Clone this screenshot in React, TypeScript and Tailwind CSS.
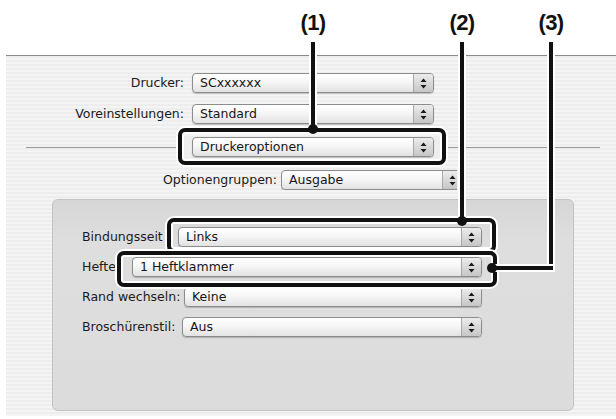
import clsx from 'clsx';

function Arrows() {
  return (
    <svg width="7" height="11" viewBox="0 0 7 11">
      <path d="M3.5 0.5 L6.5 4 L0.5 4 Z" fill="#1a1a1a" />
      <path d="M3.5 10.5 L6.5 7 L0.5 7 Z" fill="#1a1a1a" />
    </svg>
  );
}

function Popup({ value, className }: { value: string; className?: string }) {
  return (
    <div
      className={clsx(
        'flex h-[20px] items-stretch rounded-[4px] border border-[#8c8c8c] bg-[linear-gradient(#ffffff,#f6f6f6_45%,#e2e2e2)] shadow-[0_1px_1px_rgba(0,0,0,0.2)]',
        className,
      )}
    >
      <span className="flex-1 truncate pl-[7px] text-[12.5px] leading-[18px] text-[#151515]">{value}</span>
      <span className="flex w-[20px] shrink-0 items-center justify-center rounded-r-[3px] border-l border-[#a8a8a8] bg-[linear-gradient(#ececec,#c6c6c6)]">
        <Arrows />
      </span>
    </div>
  );
}

function Label({ text, className }: { text: string; className?: string }) {
  return <span className={clsx('shrink-0 text-[12.5px] leading-[20px] text-[#1a1a1a]', className)}>{text}</span>;
}

export default function App() {
  return (
    <div className="relative h-[419px] w-[616px] overflow-hidden bg-white font-['DejaVu_Sans','Liberation_Sans',sans-serif]">
      <div className="h-[55px]" />

      {/* dialog */}
      <div className="ml-[6px] flex h-[361px] flex-col border-t border-[#8a8a8a] bg-[repeating-linear-gradient(180deg,#ededed_0px,#ededed_2px,#f4f4f4_2px,#f4f4f4_4px)] pt-[17px]">
        <div className="flex items-center">
          <Label text="Drucker:" className="w-[178px] text-right" />
          <Popup value="SCxxxxxx" className="ml-[8px] w-[242px]" />
        </div>
        <div className="mt-[11px] flex items-center">
          <Label text="Voreinstellungen:" className="w-[178px] text-right" />
          <Popup value="Standard" className="ml-[8px] w-[242px]" />
        </div>
        <div className="relative mt-[13px] flex items-center">
          <div className="absolute left-[20px] right-[16px] top-[10px] h-px bg-[#9a9a9a]" />
          <div className="relative ml-[178px] bg-[#eeeeee] px-[8px]">
            <Popup value="Druckeroptionen" className="w-[242px]" />
          </div>
        </div>
        <div className="mt-[13px] flex items-center">
          <Label text="Optionengruppen:" className="w-[271px] text-right" />
          <div className="ml-[4px] w-[176px] overflow-hidden">
            <Popup value="Ausgabe" className="w-[182px]" />
          </div>
        </div>

        {/* group box */}
        <div className="ml-[46px] mt-[9px] flex h-[212px] w-[522px] flex-col gap-[10px] rounded-[6px] border border-[#c2c2c2] bg-[linear-gradient(#d6d6d6,#dedede_20%,#dcdcdc)] pl-[29px] pr-[91px] pt-[27px]">
          <div className="flex items-center">
            <Label text="Bindungsseit" className="w-[96px]" />
            <Popup value="Links" className="flex-1" />
          </div>
          <div className="flex items-center">
            <Label text="Hefte" className="w-[50px]" />
            <Popup value="1 Heftklammer" className="flex-1" />
          </div>
          <div className="flex items-center">
            <Label text="Rand wechseln:" className="w-[102px]" />
            <Popup value="Keine" className="flex-1" />
          </div>
          <div className="flex items-center">
            <Label text="Broschürenstil:" className="w-[100px]" />
            <Popup value="Aus" className="flex-1" />
          </div>
        </div>
      </div>

      {/* callouts */}
      <span className="absolute left-[295px] top-[10px] w-[36px] text-center font-['Liberation_Sans',sans-serif] text-[22px] font-bold leading-[26px] tracking-tight text-[#111]">(1)</span>
      <span className="absolute left-[444px] top-[10px] w-[36px] text-center font-['Liberation_Sans',sans-serif] text-[22px] font-bold leading-[26px] tracking-tight text-[#111]">(2)</span>
      <span className="absolute left-[533px] top-[10px] w-[36px] text-center font-['Liberation_Sans',sans-serif] text-[22px] font-bold leading-[26px] tracking-tight text-[#111]">(3)</span>

      <div className="absolute left-[178px] top-[128px] h-[37px] w-[268px] rounded-[7px] border-4 border-[#111] shadow-[0_0_0_2px_#fff,inset_0_0_0_2px_#fff]" />
      <div className="absolute left-[167px] top-[218px] h-[35px] w-[329px] rounded-[7px] border-4 border-[#111] shadow-[0_0_0_2px_#fff,inset_0_0_0_2px_#fff]" />
      <div className="absolute left-[117px] top-[251px] h-[36px] w-[380px] rounded-[7px] border-4 border-[#111] shadow-[0_0_0_2px_#fff,inset_0_0_0_2px_#fff]" />

      <div className="absolute left-[311px] top-[42px] h-[86px] w-[4px] bg-[#111] shadow-[0_0_0_2px_#fff]" />
      <div className="absolute left-[460px] top-[42px] h-[178px] w-[4px] bg-[#111] shadow-[0_0_0_2px_#fff]" />
      <div className="absolute left-[549px] top-[42px] h-[228px] w-[4px] bg-[#111] shadow-[0_0_0_2px_#fff]" />
      <div className="absolute left-[492px] top-[266px] h-[4px] w-[61px] bg-[#111] shadow-[0_0_0_2px_#fff]" />

      <div className="absolute left-[308px] top-[124px] h-[10px] w-[10px] rounded-full bg-[#111]" />
      <div className="absolute left-[457px] top-[216px] h-[10px] w-[10px] rounded-full bg-[#111]" />
      <div className="absolute left-[487px] top-[263px] h-[10px] w-[10px] rounded-full bg-[#111]" />
    </div>
  );
}
